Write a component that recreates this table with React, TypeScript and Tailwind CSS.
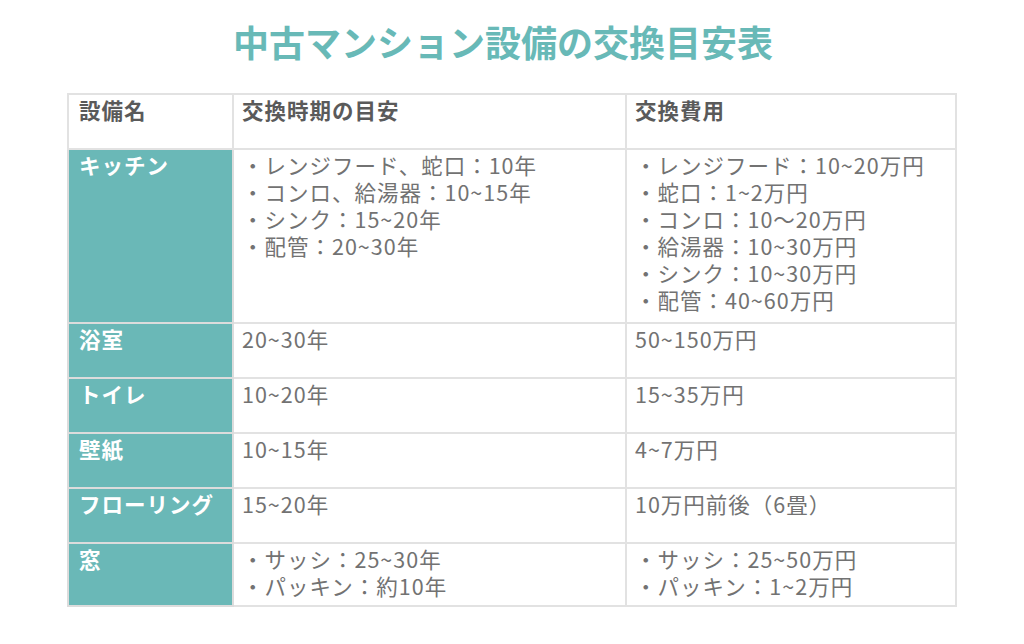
import React from "react";

const font = { fontFamily: '"Noto Sans CJK JP", "Noto Sans", sans-serif' };

type Row = { name: string; period: string[]; cost: string[]; h: string };

const rows: Row[] = [
  {
    name: "キッチン",
    period: ["・レンジフード、蛇口：10年", "・コンロ、給湯器：10~15年", "・シンク：15~20年", "・配管：20~30年"],
    cost: ["・レンジフード：10~20万円", "・蛇口：1~2万円", "・コンロ：10〜20万円", "・給湯器：10~30万円", "・シンク：10~30万円", "・配管：40~60万円"],
    h: "h-[174px]",
  },
  { name: "浴室", period: ["20~30年"], cost: ["50~150万円"], h: "h-[55px]" },
  { name: "トイレ", period: ["10~20年"], cost: ["15~35万円"], h: "h-[55px]" },
  { name: "壁紙", period: ["10~15年"], cost: ["4~7万円"], h: "h-[55px]" },
  { name: "フローリング", period: ["15~20年"], cost: ["10万円前後（6畳）"], h: "h-[55px]" },
  { name: "窓", period: ["・サッシ：25~30年", "・パッキン：約10年"], cost: ["・サッシ：25~50万円", "・パッキン：1~2万円"], h: "h-[63px]" },
];

export default function App() {
  return (
    <div className="w-[1024px] h-[644px] bg-white" style={font}>
      <h1 className="pt-[19px] pr-[18px] text-center text-[36px] leading-[44px] font-bold text-[#68b9b7]">
        中古マンション設備の交換目安表
      </h1>
      <table className="mt-[30px] mx-auto w-[888px] border-collapse table-fixed text-[21.5px] leading-[27px] tracking-[1px]">
        <colgroup>
          <col className="w-[165px]" />
          <col className="w-[393px]" />
          <col className="w-[330px]" />
        </colgroup>
        <thead>
          <tr className="h-[55px]">
            <th className="border-2 border-[#e2e2e2] align-top text-left font-bold text-[#5a5a5a] pl-[10px] pr-[8px] pt-[1px] pb-[4px]">
              設備名
            </th>
            <th className="border-2 border-[#e2e2e2] align-top text-left font-bold text-[#5a5a5a] px-[8px] pt-[1px] pb-[4px]">
              交換時期の目安
            </th>
            <th className="border-2 border-[#e2e2e2] align-top text-left font-bold text-[#5a5a5a] px-[8px] pt-[1px] pb-[4px]">
              交換費用
            </th>
          </tr>
        </thead>
        <tbody>
          {rows.map((r) => (
            <tr key={r.name} className={r.h}>
              <td className="border-2 border-[#dcdcdc] bg-[#6ab8b7] align-top font-bold text-white pl-[10px] pr-[4px] pt-[1px] pb-[4px] whitespace-nowrap">
                {r.name}
              </td>
              <td className="border-2 border-[#e2e2e2] align-top text-[#727272] px-[8px] pt-[1px] pb-[4px]">
                {r.period.map((l) => (
                  <div key={l} className="whitespace-nowrap">{l}</div>
                ))}
              </td>
              <td className="border-2 border-[#e2e2e2] align-top text-[#727272] px-[8px] pt-[1px] pb-[4px]">
                {r.cost.map((l) => (
                  <div key={l} className="whitespace-nowrap">{l}</div>
                ))}
              </td>
            </tr>
          ))}
        </tbody>
      </table>
    </div>
  );
}
